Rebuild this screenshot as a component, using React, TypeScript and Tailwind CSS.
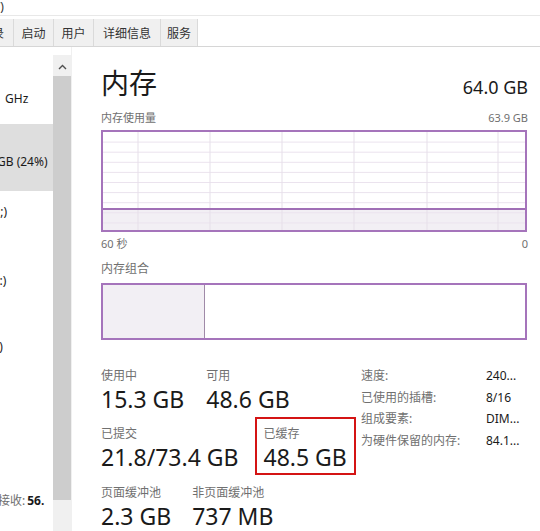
import React from "react";

const FONT = { fontFamily: '"Noto Sans", "Noto Sans CJK SC", sans-serif' };

function UsageGraph() {
  const w = 422;
  const h = 98;
  const hLines: number[] = [];
  for (let i = 1; i < 10; i++) hLines.push(i * 10.1);
  const vLines = [35, 107, 179, 251, 324, 395];
  return (
    <svg width={w} height={h} className="block">
      <rect x={0} y={77} width={w} height={h - 77} fill="#f2eff4" />
      {hLines.map((y) => (
        <line key={y} x1={0} x2={w} y1={y} y2={y} stroke="#ebe3ee" strokeWidth={1} />
      ))}
      {vLines.map((x) => (
        <line key={x} x1={x} x2={x} y1={0} y2={h} stroke="#e6dfe9" strokeWidth={1} />
      ))}
      <line x1={0} x2={w} y1={77} y2={77} stroke="#a06fb6" strokeWidth={2} />
    </svg>
  );
}

function Stat({ label, value }: { label: string; value: string }) {
  return (
    <div className="flex flex-col">
      <div className="text-[12px] leading-[16px] text-[#707070]">{label}</div>
      <div className="text-[23px] leading-[30px] text-[#1a1a1a] whitespace-nowrap">{value}</div>
    </div>
  );
}

export default function App() {
  return (
    <div className="w-[540px] h-[531px] bg-white overflow-hidden flex flex-col" style={FONT}>
      {/* menu bar */}
      <div className="h-[16px] shrink-0 border-b border-[#e8e8e8] overflow-hidden relative">
        <span className="block text-[12px] leading-[14px] text-[#333] -ml-[7px]">V)</span>
      </div>
      {/* tabs */}
      <div className="h-[31px] shrink-0 flex items-stretch border-b border-[#d6d6d6] pt-[3px]">
        <div className="flex items-stretch bg-[#f0f0f0]">
          <div className="w-[14px] overflow-hidden border-r border-[#dadada] flex items-center pt-[3px]">
            <span className="text-[12px] text-[#333] -ml-[8px]">录</span>
          </div>
          <div className="w-[40px] border-r border-[#dadada] flex items-center justify-center pt-[3px] text-[12px] text-[#333]">启动</div>
          <div className="w-[40px] border-r border-[#dadada] flex items-center justify-center pt-[3px] text-[12px] text-[#333]">用户</div>
          <div className="w-[67px] border-r border-[#dadada] flex items-center justify-center pt-[3px] text-[12px] text-[#333]">详细信息</div>
          <div className="w-[37px] border-r border-[#dadada] flex items-center justify-center pt-[3px] text-[12px] text-[#333]">服务</div>
        </div>
        <div className="flex-1" />
      </div>
      {/* body */}
      <div className="flex-1 min-h-0 flex">
        {/* sidebar */}
        <div className="w-[53px] shrink-0 flex flex-col overflow-hidden text-[12px] text-[#1a1a1a] whitespace-nowrap">
          <div className="h-[77px] shrink-0 flex items-center pl-[5px] pt-[26px]">GHz</div>
          <div className="h-[67px] shrink-0 bg-[#dedede] flex items-center -ml-[3px] pt-[8px]">GB (24%)</div>
          <div className="h-[42px] shrink-0 flex items-center -ml-[3px]">:;)</div>
          <div className="h-[96px] shrink-0 flex items-center -ml-[4px]">):)</div>
          <div className="h-[36px] shrink-0 flex items-center -ml-[4px]">:)</div>
          <div className="h-[145px] shrink-0 flex items-end -ml-[2px]">
            <span className="text-[#707070]">接收:</span>
            <span className="font-bold ml-[2px]">56.</span>
          </div>
        </div>
        {/* scrollbar */}
        <div className="w-[19px] shrink-0 flex flex-col pt-[8px] border-r border-[#f0f0f0]">
          <div className="h-[21px] shrink-0 bg-[#f0f0f0] flex items-center justify-center pt-[3px]">
            <svg width="9" height="6" viewBox="0 0 9 6">
              <path d="M1 5 L4.5 1.5 L8 5" fill="none" stroke="#505050" strokeWidth="1.4" />
            </svg>
          </div>
          <div className="h-[424px] shrink-0 bg-[#cdcdcd]" />
          <div className="flex-1 bg-[#f0f0f0]" />
        </div>
        {/* main */}
        <div className="flex-1 pl-[29px] pr-[12px] flex flex-col">
          <div className="flex shrink-0 items-end justify-between mt-[18px]">
            <div className="text-[28px] leading-[36px] text-[#1a1a1a]">内存</div>
            <div className="text-[18px] leading-[24px] text-[#1a1a1a] mb-[2px]">64.0 GB</div>
          </div>
          <div className="flex shrink-0 justify-between text-[11px] leading-[16px] text-[#707070] mt-[9px]">
            <span>内存使用量</span>
            <span>63.9 GB</span>
          </div>
          <div className="mt-[4px] shrink-0 border-2 border-[#a574bb] w-[426px] h-[102px]">
            <UsageGraph />
          </div>
          <div className="flex shrink-0 justify-between text-[11px] leading-[16px] text-[#707070] mt-[4px]">
            <span>60 秒</span>
            <span>0</span>
          </div>
          <div className="shrink-0 text-[12px] leading-[16px] text-[#707070] mt-[9px]">内存组合</div>
          <div className="mt-[6px] shrink-0 border-2 border-[#a574bb] w-[426px] h-[57px] flex">
            <div className="w-[102px] bg-[#f2eff4] border-r border-[#a08aa8]" />
            <div className="flex-1" />
          </div>
          <div className="flex shrink-0 mt-[28px]">
            <div className="w-[260px] flex flex-col">
              <div className="flex gap-[22px]">
                <Stat label="使用中" value="15.3 GB" />
                <Stat label="可用" value="48.6 GB" />
              </div>
              <div className="flex gap-[25px] mt-[12px]">
                <Stat label="已提交" value="21.8/73.4 GB" />
                <div className="relative">
                  <Stat label="已缓存" value="48.5 GB" />
                  <div className="absolute -left-[9px] -top-[9px] w-[101px] h-[58px] border-2 border-[#d41414]" />
                </div>
              </div>
              <div className="flex gap-[21px] mt-[13px]">
                <Stat label="页面缓冲池" value="2.3 GB" />
                <Stat label="非页面缓冲池" value="737 MB" />
              </div>
            </div>
            <div className="flex flex-col text-[12px] leading-[21.5px] text-[#1a1a1a] -mt-[3px]">
              <div className="flex"><span className="w-[125px] text-[#707070]">速度:</span><span>240...</span></div>
              <div className="flex"><span className="w-[125px] text-[#707070]">已使用的插槽:</span><span>8/16</span></div>
              <div className="flex"><span className="w-[125px] text-[#707070]">组成要素:</span><span>DIM...</span></div>
              <div className="flex"><span className="w-[125px] text-[#707070]">为硬件保留的内存:</span><span>84.1...</span></div>
            </div>
          </div>
        </div>
      </div>
    </div>
  );
}
